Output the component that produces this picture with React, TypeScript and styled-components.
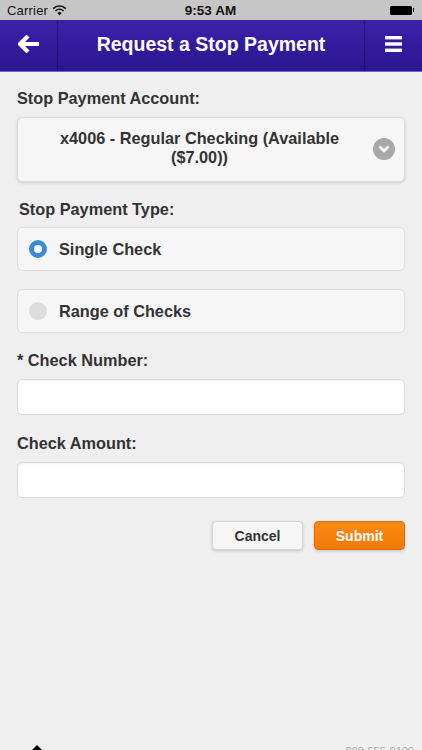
import React from 'react';
import styled, { createGlobalStyle } from 'styled-components';

const GlobalStyle = createGlobalStyle`
	html, body {
		margin: 0;
		padding: 0;
		background: #efefef;
	}

	body {
		font-family: "Liberation Sans", Arial, Helvetica, sans-serif;
		color: #333;
		overflow: hidden;
	}

	* {
		box-sizing: border-box;
	}
`;

const Screen = styled.div`
	width: 422px;
	height: 750px;
	display: flex;
	flex-direction: column;
	background: #efefef;
	overflow: hidden;
`;

const StatusBar = styled.div`
	height: 20px;
	background: #c6c6c6;
	display: grid;
	grid-template-columns: 1fr auto 1fr;
	align-items: center;
	padding: 0 8px 0 7px;
	font-size: 13px;
	color: #111;
`;

const Carrier = styled.div`
	display: flex;
	align-items: center;
	gap: 4px;
	letter-spacing: 0.2px;
`;

const Clock = styled.div`
	font-weight: 600;
	font-size: 13.5px;
`;

const Battery = styled.div`
	justify-self: end;
	display: flex;
	align-items: center;

	span {
		display: block;
		width: 22px;
		height: 9px;
		background: #000;
		border-radius: 1.5px;
	}

	i {
		display: block;
		width: 1.5px;
		height: 4px;
		background: #000;
		margin-left: 1px;
	}
`;

const Header = styled.header`
	height: 52px;
	background: linear-gradient(#3a22a8, #2a1690);
	border-bottom: 1px solid #6e62c4;
	display: grid;
	grid-template-columns: 58px 1fr 58px;
	align-items: stretch;
`;

const HeaderButton = styled.div<{ $side: 'left' | 'right' }>`
	display: flex;
	align-items: center;
	justify-content: center;
	${(p) => (p.$side === 'left' ? 'border-right' : 'border-left')}: 1px solid rgba(20, 8, 90, 0.45);
	padding-bottom: 3px;
`;

const Title = styled.h1`
	margin: 0;
	display: flex;
	align-items: center;
	justify-content: center;
	color: #fff;
	font-size: 19.5px;
	font-weight: bold;
	padding-bottom: 3px;
	white-space: nowrap;
`;

const Content = styled.main`
	padding: 17px 17px 0;
	display: flex;
	flex-direction: column;
`;

const Label = styled.div<{ $inset?: boolean }>`
	font-size: 16.3px;
	font-weight: bold;
	color: #333;
	padding-left: ${(p) => (p.$inset ? '2px' : '0')};
	margin-top: ${(p) => (p.$inset ? '18px' : '0')};
	margin-bottom: ${(p) => (p.$inset ? '8px' : '9px')};
	line-height: 19px;
`;

const SelectBox = styled.div`
	height: 65px;
	background: #f6f6f6;
	border: 1px solid #dcdcdc;
	border-radius: 5px;
	box-shadow: 0 1px 3px rgba(0, 0, 0, 0.15);
	display: grid;
	grid-template-columns: 1fr 22px;
	align-items: center;
	padding: 0 9px 0 8px;
`;

const SelectText = styled.div`
	text-align: center;
	font-size: 16.3px;
	font-weight: bold;
	line-height: 19px;
	color: #333;
	padding-bottom: 4px;
`;

const Chevron = styled.div`
	width: 22px;
	height: 22px;
	border-radius: 50%;
	background: #a9a9a9;
	display: flex;
	align-items: center;
	justify-content: center;
	margin-bottom: 2px;
`;

const RadioRow = styled.div`
	height: 44px;
	background: #f6f6f6;
	border: 1px solid #dedede;
	border-radius: 5px;
	display: flex;
	align-items: center;
	gap: 12px;
	padding-left: 11px;
	font-size: 16.3px;
	font-weight: bold;
	color: #333;
	margin-bottom: 18px;
`;

const RadioDot = styled.span<{ $checked: boolean }>`
	width: 18px;
	height: 18px;
	border-radius: 50%;
	background: ${(p) => (p.$checked ? '#3a8bd1' : '#dcdcdc')};
	display: flex;
	align-items: center;
	justify-content: center;

	&::after {
		content: '';
		display: ${(p) => (p.$checked ? 'block' : 'none')};
		width: 8px;
		height: 8px;
		border-radius: 50%;
		background: #fff;
	}
`;

const TextInput = styled.div`
	height: 36px;
	background: #fff;
	border: 1px solid #dcdcdc;
	border-radius: 5px;
	box-shadow: inset 0 1px 2px rgba(0, 0, 0, 0.06);
	margin-bottom: 19px;
`;

const Actions = styled.div`
	display: flex;
	justify-content: flex-end;
	gap: 11px;
	margin-top: 4px;
`;

const Button = styled.button<{ $primary?: boolean }>`
	width: 91px;
	height: 29px;
	border-radius: 4px;
	font-family: inherit;
	font-size: 14px;
	font-weight: bold;
	cursor: pointer;
	color: ${(p) => (p.$primary ? '#fff' : '#333')};
	background: ${(p) => (p.$primary ? 'linear-gradient(#fa8a14, #f27a05)' : '#f6f6f6')};
	border: 1px solid ${(p) => (p.$primary ? '#e06a00' : '#d6d6d6')};
	box-shadow: 0 1px 3px rgba(0, 0, 0, 0.18);
`;

const Footer = styled.footer`
	margin-top: auto;
	height: 5px;
	display: flex;
	justify-content: space-between;
	align-items: flex-start;
	padding: 0 8px 0 30px;
	overflow: hidden;
`;

const Phone = styled.span`
	font-size: 11px;
	color: #aaa;
	line-height: 12px;
`;

const App = () => {
	return (
		<>
			<GlobalStyle />
			<Screen>
				<StatusBar>
					<Carrier>
						Carrier
						<svg width="15" height="11" viewBox="0 0 15 11">
							<path d="M7.5 10.5 L5.3 8 A3.2 3.2 0 0 1 9.7 8 Z" fill="#111" />
							<path d="M3.4 6 A5.8 5.8 0 0 1 11.6 6" stroke="#111" strokeWidth="1.6" fill="none" />
							<path d="M1.2 3.6 A8.8 8.8 0 0 1 13.8 3.6" stroke="#111" strokeWidth="1.6" fill="none" />
						</svg>
					</Carrier>
					<Clock>9:53 AM</Clock>
					<Battery>
						<span />
						<i />
					</Battery>
				</StatusBar>

				<Header>
					<HeaderButton $side="left">
						<svg width="22" height="18" viewBox="0 0 22 18">
							<path d="M10 1 L2 9 L10 17 M2.5 9 H21" stroke="#fff" strokeWidth="4.2" fill="none" strokeLinejoin="miter" />
						</svg>
					</HeaderButton>
					<Title>Request a Stop Payment</Title>
					<HeaderButton $side="right">
						<svg width="17" height="16" viewBox="0 0 17 16">
							<rect x="0" y="0" width="17" height="3.4" fill="#fff" />
							<rect x="0" y="6.3" width="17" height="3.4" fill="#fff" />
							<rect x="0" y="12.6" width="17" height="3.4" fill="#fff" />
						</svg>
					</HeaderButton>
				</Header>

				<Content>
					<Label>Stop Payment Account:</Label>
					<SelectBox>
						<SelectText>
							x4006 - Regular Checking (Available
							<br />
							($7.00))
						</SelectText>
						<Chevron>
							<svg width="12" height="8" viewBox="0 0 12 8">
								<path d="M1.5 1.5 L6 6 L10.5 1.5" stroke="#fff" strokeWidth="2.6" fill="none" />
							</svg>
						</Chevron>
					</SelectBox>

					<Label $inset>Stop Payment Type:</Label>
					<RadioRow>
						<RadioDot $checked />
						Single Check
					</RadioRow>
					<RadioRow>
						<RadioDot $checked={false} />
						Range of Checks
					</RadioRow>

					<Label>* Check Number:</Label>
					<TextInput />
					<Label>Check Amount:</Label>
					<TextInput />

					<Actions>
						<Button>Cancel</Button>
						<Button $primary>Submit</Button>
					</Actions>
				</Content>

				<Footer>
					<svg width="14" height="8" viewBox="0 0 14 8">
						<path d="M7 0 L13 6 H1 Z" fill="#000" />
					</svg>
					<Phone>800-555-0100</Phone>
				</Footer>
			</Screen>
		</>
	);
};

export default App;
